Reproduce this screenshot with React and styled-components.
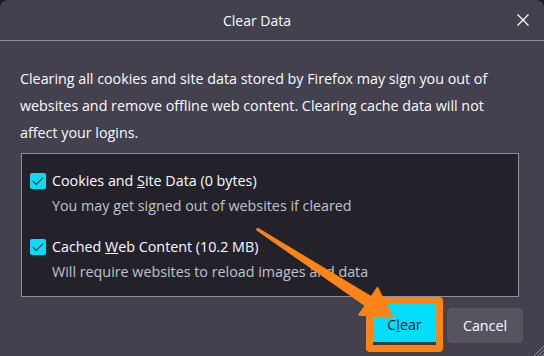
import styled, { createGlobalStyle } from 'styled-components';

const Global = createGlobalStyle`
  body {
    margin: 0;
    background: #1c1b22;
    font-family: 'Open Sans', 'Noto Sans', sans-serif;
  }
`
const Dialog = styled.div`
  position: relative;
  width: 544px;
  height: 356px;
  background: #42414d;
  border-radius: 8px 8px 0 0;
  color: #fbfbfe;
  display: flex;
  flex-direction: column;
  overflow: hidden;
`
const Header = styled.div`
  height: 40px;
  display: flex;
  align-items: center;
  padding-right: 12px;
  border-bottom: 1px solid #8f8f9d;
`
const Title = styled.div`
  flex: 1;
  text-align: center;
  font-size: 14px;
  padding-top: 1px;
`
const Close = styled.div`
  width: 18px;
  height: 18px;
  display: flex;
  align-items: center;
  justify-content: center;
`
const Intro = styled.p`
  margin: 24px 24px 0 20px;
  font-size: 14.3px;
  line-height: 27px;
`
const Box = styled.div`
  margin: 7px 25px 0 21px;
  height: 144px;
  box-sizing: border-box;
  border: 1px solid #8f8f9d;
  background: #23222b;
  padding: 16px 0 0 8px;
  display: flex;
  flex-direction: column;
  gap: 19px;
`
const Item = styled.div`
  display: grid;
  grid-template-columns: 16px 1fr;
  column-gap: 6px;
  row-gap: 3px;
  align-items: center;
`
const Check = styled.span`
  width: 16px;
  height: 16px;
  border-radius: 2px;
  background: #00ddff;
  display: flex;
  align-items: center;
  justify-content: center;
`
const Label = styled.span`
  font-size: 14.3px;
  line-height: 22px;
`
const Sub = styled.span`
  grid-column: 2;
  font-size: 14.3px;
  line-height: 22px;
  color: #c2c2cb;
`
const Footer = styled.div`
  flex: 1;
  display: flex;
  justify-content: flex-end;
  align-items: center;
  gap: 4px;
  padding: 0 21px 3px 0;
`
const Highlight = styled.div`
  border: 7px solid #ff8417;
  border-radius: 4px;
  margin-top: -1px;
`
const Button = styled.button`
  height: ${p => p.$primary ? '41px' : '35px'};
  width: ${p => p.$primary ? '63px' : '76px'};
  border: none;
  border-radius: ${p => p.$primary ? '0' : '4px'};
  border-bottom: ${p => p.$primary ? '3px solid #3a3942' : 'none'};
  background: ${p => p.$primary ? '#00ddff' : '#55545f'};
  color: ${p => p.$primary ? '#15141a' : '#fbfbfe'};
  font-family: inherit;
  font-size: 14.3px;
  padding: 0;
  padding-top: ${p => p.$primary ? '2px' : '0'};
`
const Overlay = styled.svg`
  position: absolute;
  left: 0;
  top: 0;
  pointer-events: none;
`
const Grip = styled.svg`
  position: absolute;
  right: 0;
  bottom: 0;
`

const CheckMark = () => (
  <svg width="12" height="10" viewBox="0 0 12 10">
    <path d="M0.8 5 L4.3 8.5 L11.2 1.3" fill="none" stroke="#2b2a33" strokeWidth="1.2" />
  </svg>
)

const App = () => {
  return (
    <>
      <Global />
      <Dialog>
        <Header>
          <Title>Clear Data</Title>
          <Close>
            <svg width="12" height="12" viewBox="0 0 12 12">
              <path d="M0.5 0.5 L11.5 11.5 M11.5 0.5 L0.5 11.5" stroke="#fbfbfe" strokeWidth="1.3" />
            </svg>
          </Close>
        </Header>
        <Intro>
          Clearing all cookies and site data stored by Firefox may sign you out of
          websites and remove offline web content. Clearing cache data will not
          affect your logins.
        </Intro>
        <Box>
          <Item>
            <Check><CheckMark /></Check>
            <Label>Cookies and <u>S</u>ite Data (0 bytes)</Label>
            <Sub>You may get signed out of websites if cleared</Sub>
          </Item>
          <Item>
            <Check><CheckMark /></Check>
            <Label>Cached <u>W</u>eb Content (10.2 MB)</Label>
            <Sub>Will require websites to reload images and data</Sub>
          </Item>
        </Box>
        <Footer>
          <Highlight>
            <Button $primary>C<u>l</u>ear</Button>
          </Highlight>
          <Button>Cancel</Button>
        </Footer>
        <Overlay width="544" height="356" viewBox="0 0 544 356">
          <polygon
            points="257.5,228 371.1,296.4 377.5,286.9 392.9,317.7 358.5,315.1 364.9,305.6 256.5,230"
            fill="#ff8417"
            stroke="#ff8417"
            strokeWidth="1"
            strokeLinejoin="round"
          />
        </Overlay>
        <Grip width="12" height="12" viewBox="0 0 12 12">
          <path d="M12 2 L2 12 M12 6 L6 12 M12 10 L10 12" stroke="#8f8f9d" strokeWidth="1" />
        </Grip>
      </Dialog>
    </>
  )
}

export default App;
